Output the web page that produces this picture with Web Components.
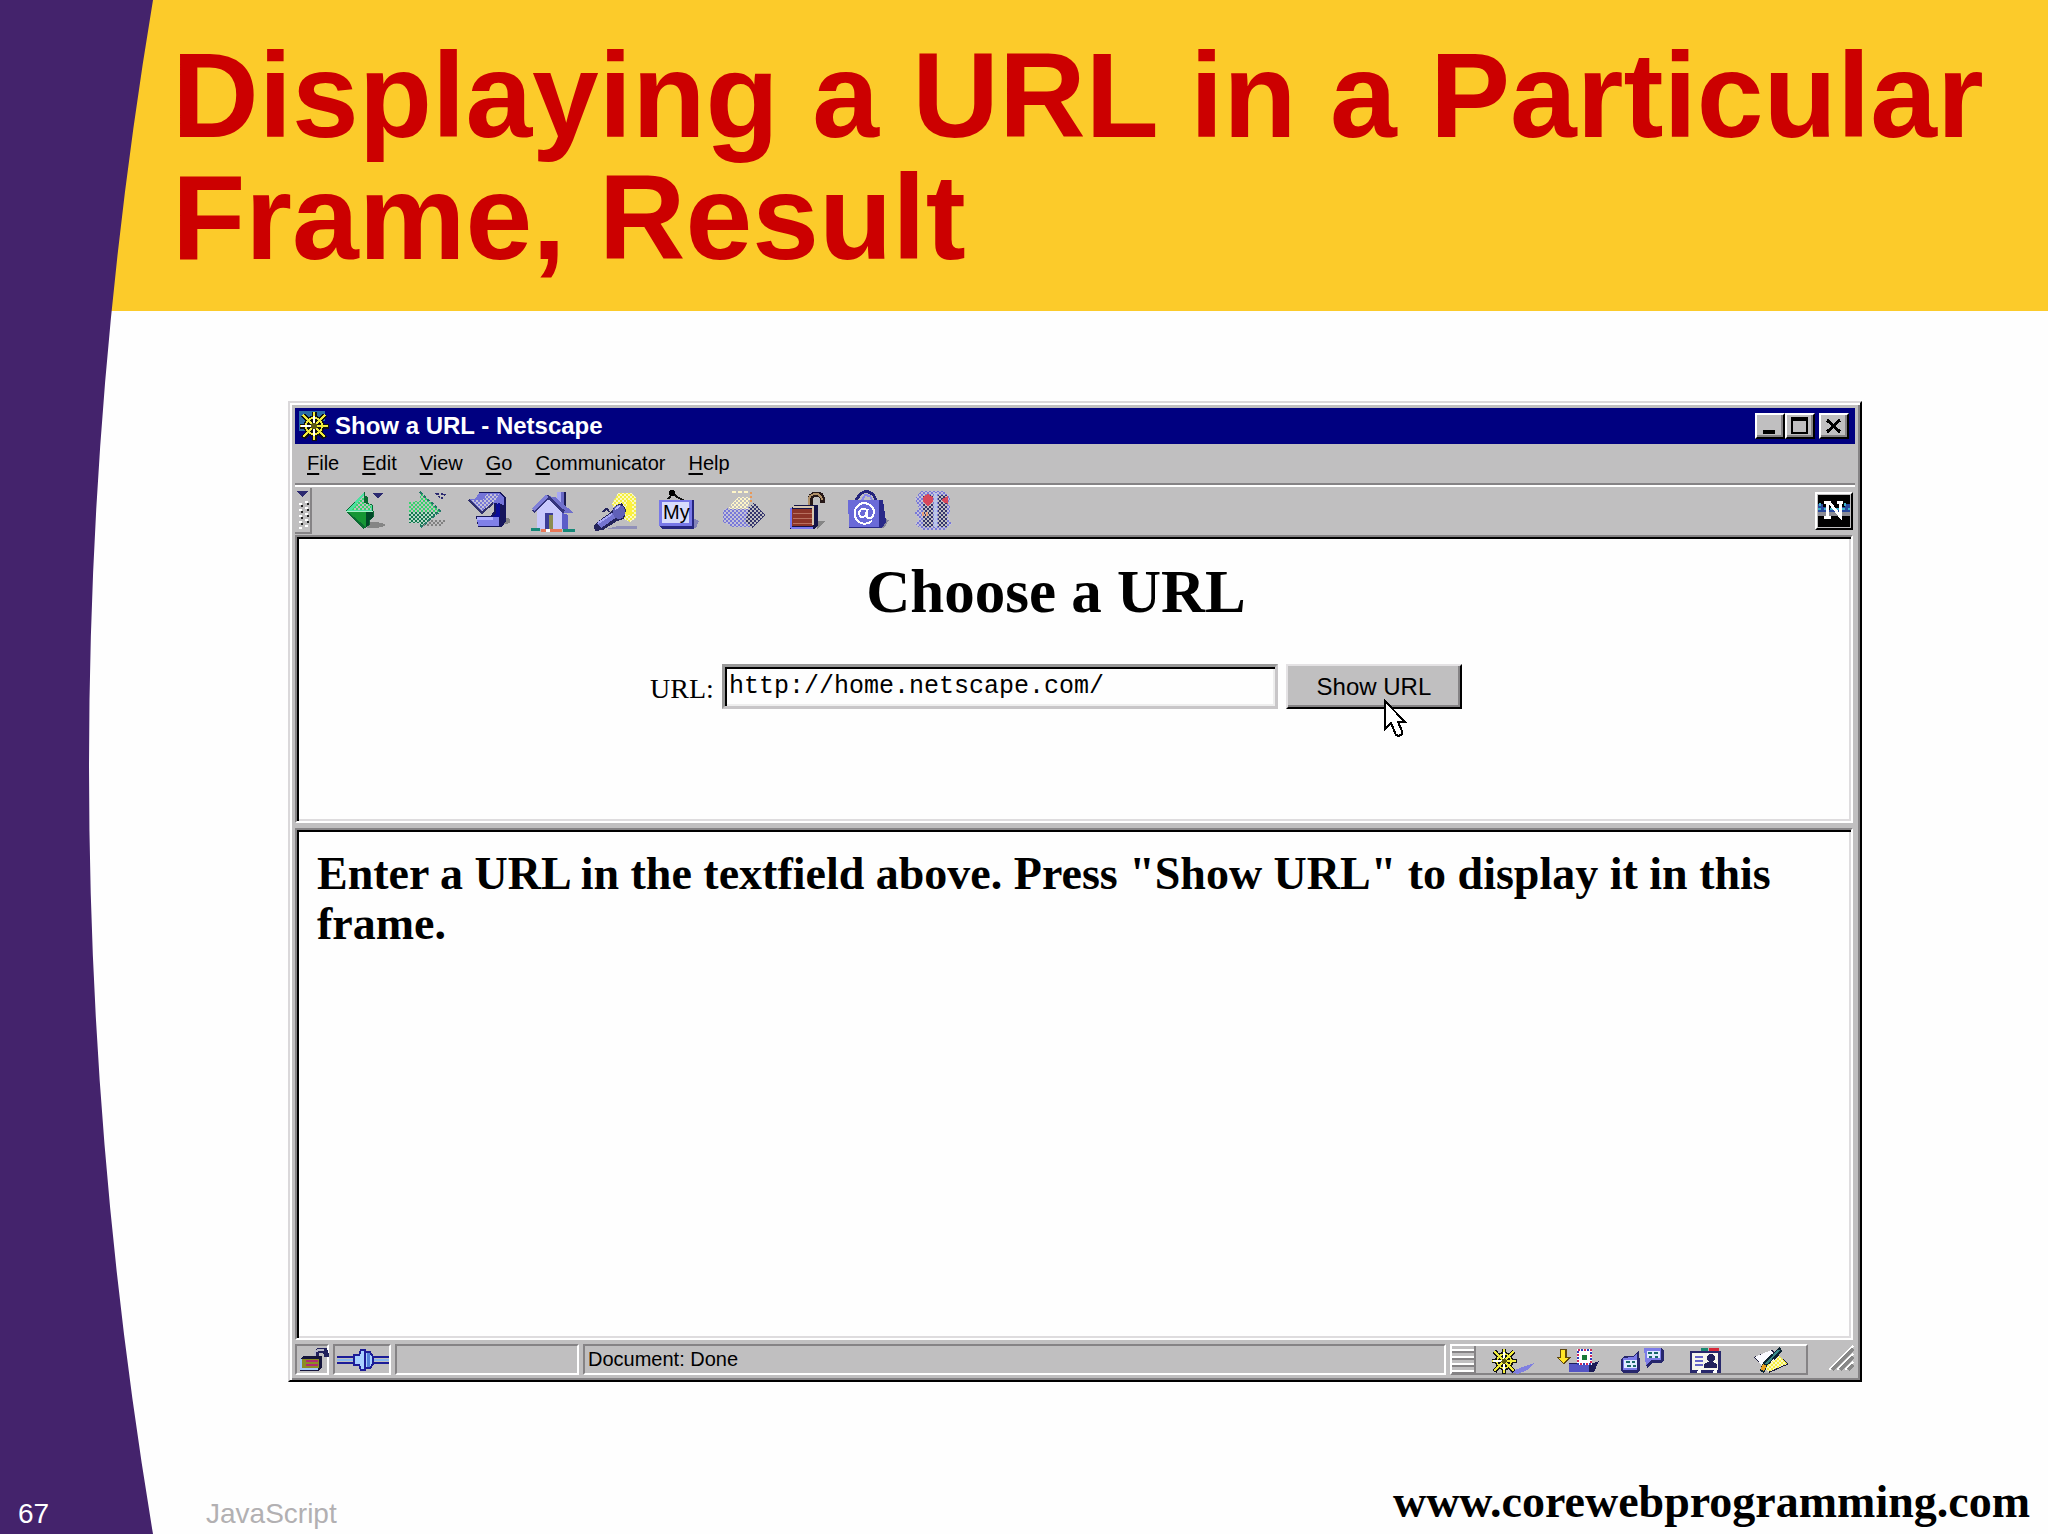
<!DOCTYPE html>
<html lang="en">
<head>
<meta charset="utf-8">
<title>Displaying a URL in a Particular Frame, Result</title>
<style>
  html, body { margin: 0; }
  body { background: #fefefe; font-family: "Liberation Sans", Arial, sans-serif; color: #000; }
</style>
</head>
<body>
<slide-page>
  <slide-title slot="title">Displaying a URL in a Particular Frame, Result</slide-title>
  <browser-window>
    <title-bar slot="chrome">Show a URL - Netscape</title-bar>
    <menu-bar slot="chrome" items="File,Edit,View,Go,Communicator,Help"></menu-bar>
    <tool-bar slot="chrome"></tool-bar>
    <url-frame slot="top" value="http://home.netscape.com/">Choose a URL</url-frame>
    <message-frame slot="bottom">Enter a URL in the textfield above. Press "Show URL" to display it in this frame.</message-frame>
    <status-bar slot="status">Document: Done</status-bar>
  </browser-window>
  <slide-footer slot="footer" number="67" site="www.corewebprogramming.com">JavaScript</slide-footer>
</slide-page>

<script>
// dithered fills shared by the small icons
const dither = `<defs>
  <pattern id="green" width="4" height="4" patternUnits="userSpaceOnUse"><path fill="#c0bfc0" d="M0 0h4v4H0z"/><path fill="#35d46c" d="M0 0h2v2H0zM2 2h2v2H2z"/></pattern>
  <pattern id="teal" width="4" height="4" patternUnits="userSpaceOnUse"><path fill="#b8d8c8" d="M0 0h4v4H0z"/><path fill="#147850" d="M0 0h2v2H0zM2 2h2v2H2z"/></pattern>
  <pattern id="blue" width="4" height="4" patternUnits="userSpaceOnUse"><path fill="#c4c2d8" d="M0 0h4v4H0z"/><path fill="#7878d8" d="M0 0h2v2H0zM2 2h2v2H2z"/></pattern>
  <pattern id="dark" width="4" height="4" patternUnits="userSpaceOnUse"><path fill="#c0bfc0" d="M0 0h4v4H0z"/><path fill="#34346c" d="M0 0h2v2H0zM2 2h2v2H2z"/></pattern>
  <pattern id="yellow" width="4" height="4" patternUnits="userSpaceOnUse"><path fill="#fbf9c0" d="M0 0h4v4H0z"/><path fill="#f4ee40" d="M0 0h2v2H0zM2 2h2v2H2z"/></pattern>
  <pattern id="cream" width="4" height="4" patternUnits="userSpaceOnUse"><path fill="#c0bfc0" d="M0 0h4v4H0z"/><path fill="#fff6c8" d="M0 0h2v2H0zM2 2h2v2H2z"/></pattern>
  <pattern id="grey" width="4" height="4" patternUnits="userSpaceOnUse"><path fill="#c0bfc0" d="M0 0h4v4H0z"/><path fill="#808080" d="M0 0h2v2H0zM2 2h2v2H2z"/></pattern>
</defs>`;

const wheel = `<g fill="none" stroke="#111" stroke-width="5"><path d="M15 1v29M1 15h29M4 4l22 23M26 4L4 27"/><circle cx="15" cy="15" r="8"/></g>
  <g fill="none" stroke="#f2ec3c" stroke-width="2"><path d="M15 1v28M1 15h28M4 4l22 22M26 4L4 26"/><circle cx="15" cy="15" r="8"/></g>
  <path d="M15 5v20M2 15h12" stroke="#fff" stroke-width="2"/><circle cx="15" cy="15" r="3" fill="#5c5810"/>`;

const icons = {
  wheel: [30, 30, `<path d="M0 0h30v30H0z" fill="#000080"/><path d="M0 0h26v10H10v10H0z" fill="#2a6ca8"/>` + wheel],
  back: [48, 42, `<ellipse cx="31" cy="35" rx="12" ry="3" fill="#858585"/>
    <path d="M23 1v5l3 1v6l5 2 1 12-4 3v5l-7 4L4 21z" fill="#0a6a32"/><path d="M22 2v11l8 2v6H5z" fill="#4ce0a0"/>
    <path d="M22 5v8l7 2v5H10z" fill="url(#green)"/><path d="M6 22h18v15z" fill="#159634"/><path d="M24 22h7v6l-4 2v5l-3 2z" fill="#004828"/><path d="M4 21h27" stroke="#a8f0c8" stroke-width="1"/>
    <path d="M31 3h10l-5 6z" fill="#2c2a70"/>`],
  forward: [48, 42, `<path d="M17 30h24l-6 6H16z" fill="url(#grey)"/>
    <path d="M15 2l20 19-20 17v-5H4V12l11-1z" fill="url(#green)"/><path d="M4 22h31L15 38v-5H4z" fill="url(#teal)"/>
    <path d="M15 2l20 19-20 17" fill="none" stroke="#247868" stroke-width="2" stroke-dasharray="3 2"/>
    <path d="M32 4h8l-4 5z" fill="none" stroke="#2c2a70" stroke-width="2" stroke-dasharray="2 2"/>`],
  reload: [48, 42, `<path d="M35 26l7 3v4l-8 2z" fill="#858585"/>
    <path d="M11 2h22l5 6v23l-4 6H10L8 26h15l3-5V10H10z" fill="#16165c"/>
    <path d="M11 3h20l5 5v7l-9-2-12 10L1 9h6z" fill="#7474d8"/><path d="M3 10h12l4-6h12l-4 8-12 10z" fill="url(#blue)"/>
    <path d="M9 27h22v9H10z" fill="#8080e8"/><path d="M9 27h16v3H9z" fill="#b0b0ff"/><path d="M28 14l4-1v14h-7l3-4z" fill="#0a0a98"/>
    <path d="M1 10l13 13 11-10" fill="none" stroke="#30306c" stroke-width="2"/>`],
  home: [48, 42, `<path d="M31 23l6 2v14h-6z" fill="#5c5cc8"/><path d="M26 2h8v17h-8z" fill="#6868c4"/><path d="M26 2h4v15h-4z" fill="#a8a8f4"/><path d="M34 2v16" stroke="#1c1c54" stroke-width="2"/>
    <path d="M16 8l15 15v16H6V20z" fill="#c8c8fc"/><path d="M16 6l8 1 19 16h-9z" fill="#7070cc"/>
    <path d="M2 22L17 7l16 15" fill="none" stroke="#34347c" stroke-width="3"/><path d="M2 20L16 6" stroke="#8080d8" stroke-width="3"/>
    <path d="M14 23h8v16h-8z" fill="#3c3c98"/><path d="M18 25h4v14h-4z" fill="#8c8c50"/>
    <path d="M0 39h9M32 40h12" stroke="#168878" stroke-width="3"/><path d="M10 40h21" stroke="#e87858" stroke-width="3"/><path d="M15 40h4" stroke="#fff" stroke-width="3"/>`],
  search: [48, 42, `<path d="M24 36h19v3H12z" fill="#9090b8"/><path d="M24 3h14l4 5v20l-6 4-12-6-6-12z" fill="url(#yellow)"/><path d="M33 10l5 2v12l-6 2z" fill="#fff23c"/>
    <path d="M22 15l6-2 4 7-2 9-7 2-14 9-8 1-1-5 3-4 13-9z" fill="#24245c"/>
    <path d="M3 33l16-10 4 4L7 38z" fill="#7474d0"/><path d="M4 33l14-9" stroke="#a8a8f8" stroke-width="2"/><ellipse cx="25" cy="22" rx="6" ry="7" fill="#6060b8"/><path d="M21 19l5-3" stroke="#b8b8ff" stroke-width="2"/><path d="M9 22q4-6 6 0" fill="none" stroke="#24245c" stroke-width="2"/>`],
  my: [48, 42, `<path d="M36 28l6 3-3 7h-8z" fill="#8484b8"/><path d="M11 9l5-6 4 4 8 4" fill="none" stroke="#111" stroke-width="2"/><circle cx="15" cy="3" r="3"/>
    <path d="M2 10h35v29H5l-3-3z" fill="#262680"/><path d="M2 10h33v26H2z" fill="#7878e8"/><path d="M5 12h27v21H5z" fill="#d8dcfc"/>
    <text x="6" y="29" font-size="20" font-family="Liberation Sans, Arial, sans-serif">My</text>`],
  print: [48, 42, `<path d="M3 20l8-3h20l12 7-9 13H13L3 32z" fill="url(#blue)"/><path d="M29 18l5-6 11 13-13 14-7-7z" fill="url(#dark)"/>
    <path d="M18 7h12l-2 12H8l6-8z" fill="url(#cream)"/><path d="M12 2h18" stroke="#fff6c8" stroke-width="2" stroke-dasharray="4 2"/><path d="M31 2v12" stroke="#e89858" stroke-width="2" stroke-dasharray="2 2"/>`],
  lock: [48, 42, `<path d="M34 31h8l-8 8z" fill="#858585"/><path d="M27 17V8q2-4 7-4 6 0 6 9" fill="none" stroke="#261818" stroke-width="5"/><path d="M26 17V8q2-4 7-4 5 0 6 6" fill="none" stroke="#b09068" stroke-width="2"/>
    <path d="M7 19l4-4h24v20l-4 4H7z" fill="#141448"/><path d="M9 19h21v17H9z" fill="#8c3428"/><path d="M10 23h20M10 28h20M10 33h20" stroke="#b87060" stroke-width="1"/>
    <path d="M8 18v20M8 38h22" stroke="#7878f0" stroke-width="2"/><path d="M10 17h20v18" fill="none" stroke="#d8c8b0" stroke-width="2"/>`],
  shop: [48, 42, `<path d="M36 28l7 2-5 8h-7z" fill="#858598"/><path d="M9 12l5-8 6-3 7 3 4 8" fill="none" stroke="#24247c" stroke-width="3"/><path d="M15 12l4-7 5 1 3 6" fill="none" stroke="#8888ec" stroke-width="2"/>
    <path d="M2 10h35l3 22-4 6H3z" fill="#282888"/><path d="M2 10h31v27H3z" fill="#6a6ad8"/>
    <path d="M26 31q-6 5-13 1-7-6-3-14 5-7 12-4 8 3 5 12-3 4-6 1v-8M20 19q-7-1-7 5 1 5 6 2l3-7" fill="none" stroke="#fff" stroke-width="2"/>`],
  stop: [48, 42, `<path d="M12 1h22l7 5v5l-3 2 3 4v6l-3 3 5 8-8 6H14l-8-6 4-5-4-6 4-5-4-9z" fill="url(#blue)"/><path d="M14 5h10v32H14zM29 5h9v32h-9z" fill="url(#dark)"/>
    <path d="M14 7l5-3 5 3v5l-5 4-5-4zM33 9l6-3v8l-5-2z" fill="#d8485c"/><path d="M13 24h6" stroke="#e8a078" stroke-width="4" stroke-dasharray="2 2"/><path d="M26 3v34" stroke="#b8c4e8" stroke-width="3"/>`],
  netscape: [32, 32, `<path d="M0 0h32v32H0z" fill="#000"/><path d="M0 9h5v3h5v3h13v-3h4V9h5v11H0z" fill="#28489c"/><path d="M0 14h32M2 8v4M27 8v4" stroke="#3cb0c8" stroke-width="2" stroke-dasharray="3 3"/><path d="M0 17h32v4H0z" fill="#8c8c94"/>
    <path d="M9 7v14M6 7h5l11 14V7M19 7h6M6 22h7" fill="none" stroke="#fff" stroke-width="3"/>`],
  smallock: [32, 26, `<path d="M17 9V6l3-3h6l2 7" fill="none" stroke="#20205c" stroke-width="5"/><path d="M16 9V5l3-2h6" fill="none" stroke="#b8b8c8" stroke-width="2"/>
    <path d="M1 12l3-3h19v11l-3 4H1z" fill="#15153c"/><path d="M3 12h17v9H3z" fill="#8c8c24"/><path d="M7 14h12M7 18h12" stroke="#b02c70" stroke-width="2"/><path d="M2 12v10h17" fill="none" stroke="#a0c8f8" stroke-width="2"/>`],
  plug: [52, 26, `<path d="M0 10h17M0 16h17M36 10h16M36 16h16" stroke="#1c1c98" stroke-width="2"/><path d="M0 13h17M36 13h16" stroke="#88b8f0" stroke-width="2"/>
    <path d="M17 8h5l2-5h4v20h-4l-2-5h-5zM28 5h5l3 5v7l-3 4h-5z" fill="#a8d0ff" stroke="#1c1c98" stroke-width="2"/><path d="M31 6v14" stroke="#5080d8" stroke-width="3"/>`],
  navigator: [44, 26, `<path d="M18 24l25-9-7 7-9 4z" fill="#8080e0"/><g transform="scale(.87)">` + wheel + `</g>`],
  mail: [44, 26, `<path d="M4 1h7v8h4L8 17 0 9h4z" fill="#60480c"/><path d="M5 2h4v8h3l-5 5-5-5h3z" fill="#ffe428"/>
    <path d="M13 15h24l6-2-5 11H13z" fill="#1c1c58"/><path d="M13 16h20v8H13z" fill="#5454c4"/><path d="M21 1h15v16H21z" fill="#fff"/>
    <path d="M22 2h13v14H22z" fill="none" stroke="#d42858" stroke-width="2" stroke-dasharray="2 4"/><path d="M22 2h13v14H22z" fill="none" stroke="#2c3cc0" stroke-width="2" stroke-dasharray="2 4" stroke-dashoffset="3"/><path d="M26 7h5v5h-5z" fill="#187838"/>`],
  discuss: [44, 26, `<path d="M13 8l5-6v7l1 2v12l-3 2H2l-2-3V11l3-3z" fill="#26266c"/><path d="M12 9l4-4v17H2V10z" fill="#7c7ce8"/><path d="M3 12h13v8H3z" fill="#e0ecff"/><path d="M5 14h4M11 14h3M6 18h4M12 18h3" stroke="#186868" stroke-width="2"/>
    <path d="M23 0h18l2 3v9l-3 3h-9l-5 6z" fill="#26266c"/><path d="M23 0h17v12H30l-5 6z" fill="#7c7ce8"/><path d="M26 3h13v7H26z" fill="#e0ecff"/><path d="M27 5h4M33 5h4M28 9h3M34 9h3" stroke="#186868" stroke-width="2"/>`],
  book: [44, 26, `<path d="M15 0h7v3h-7z" fill="#188870"/><path d="M23 0h10v4H23z" fill="#d82838"/><path d="M4 3h31v22H4z" fill="#28286c"/><path d="M6 5h26v17H6z" fill="#f6f6ec"/>
    <path d="M9 9h8M9 13h8M9 17h8" stroke="#6464c8" stroke-width="2"/><path d="M18 20v-4l4-2h5l4 2v4z" fill="#20205c"/><circle cx="25" cy="10" r="4" fill="#20205c"/><path d="M11 23l2-2 2 2v2h-4zM27 23l2-2 2 2v2h-4z" fill="#fff"/>`],
  composer: [44, 26, `<path d="M3 9L21 2l17 14-20 9z" fill="#1c1c3c"/><path d="M4 9l16-7 6 7-13 11z" fill="#fafaff"/><path d="M13 20l15-12 8 8-19 8z" fill="url(#yellow)"/>
    <path d="M30 1L14 16l-3 8" fill="none" stroke="#0c2430" stroke-width="5"/><path d="M28 2L15 16" stroke="#388888" stroke-width="2"/><path d="M14 17l-3 5" stroke="#e8a020" stroke-width="4"/>`],
  cursor: [24, 40, `<path d="M1 1v28l6-6 5 12 3 1 3-2v-3l-4-9h7z" fill="#fff" stroke="#000" stroke-width="2"/>`],
  grip: [28, 28, `<path d="M2 26L26 2M10 26L26 10M18 26l8-8" stroke="#fff" stroke-width="2"/><path d="M5 26L26 5M13 26l13-13M21 26l5-5" stroke="#888" stroke-width="3"/>`]
};

function define(name, getHTML) {
  customElements.define(name, class extends HTMLElement {
    constructor() {
      super();
      this.attachShadow({mode: 'open'}).innerHTML = getHTML(this);
    }
  });
}

define('px-icon', el => {
  const [w, h, body] = icons[el.getAttribute('name')];
  return `<style>:host { display: block; flex: none; } svg { display: block; overflow: visible; }</style>
    <svg width="${w}" height="${h}" viewBox="0 0 ${w} ${h}" shape-rendering="crispEdges" aria-hidden="true">${dither}${body}</svg>`;
});

define('slide-page', () => `<style>
    :host { display: flex; flex-direction: column; position: relative; min-height: 100vh; }
    .band { position: absolute; left: 0; top: 0; width: 153px; height: 100%; }
    main { flex: 1; display: flex; padding: 90px 186px 0 288px; }
    ::slotted(browser-window) { flex: 1; min-width: 0; }
  </style>
  <slot name="title"></slot>
  <svg class="band" viewBox="0 0 153 1534" preserveAspectRatio="none" aria-hidden="true"><path d="M0 0h153Q25 767 153 1534H0z" fill="#44236c"/></svg>
  <main><slot></slot></main>
  <slot name="footer"></slot>`);

define('slide-title', () => `<style>
    :host { display: block; background: #fccb2a; padding: 34px 40px 33px 172px; }
    h1 { margin: 0; font-size: 120px; line-height: 122px; color: #cc0000; }
  </style>
  <h1><slot></slot></h1>`);

define('slide-footer', el => `<style>
    :host { display: flex; align-items: flex-end; position: relative; height: 146px; padding: 0 18px 6px; font-size: 28px; line-height: 28px; }
    .number { width: 188px; color: #fff; }
    .topic { flex: 1; color: #b2b0b2; }
    a { font: bold 46px/46px "Liberation Serif", "Times New Roman", serif; color: #000; text-decoration: none; padding-bottom: 3px; }
  </style>
  <span class="number">${el.getAttribute('number')}</span>
  <span class="topic"><slot></slot></span>
  <a href="#">${el.getAttribute('site')}</a>`);

define('browser-window', () => `<style>
    :host { display: flex; flex-direction: column; box-sizing: border-box; padding: 5px; background: #c0bfc0;
      border: 2px solid; border-color: #dad8da #000 #000 #dad8da;
      box-shadow: inset 2px 2px #fff, inset -2px -2px #858385; }
    .frames { flex: 1; display: flex; flex-direction: column; gap: 5px; margin-bottom: 4px; }
    ::slotted(message-frame) { flex: 1; }
  </style>
  <slot name="chrome"></slot>
  <div class="frames"><slot name="top"></slot><slot name="bottom"></slot></div>
  <slot name="status"></slot>`);

define('title-bar', () => `<style>
    :host { display: flex; align-items: center; height: 36px; padding: 0 6px 0 4px; background: #000080; color: #fff; font-size: 24px; font-weight: bold; }
    .caption { flex: 1; margin-left: 6px; line-height: 28px; }
    button { width: 30px; height: 26px; padding: 0; display: grid; place-items: center; background: #c0bfc0;
      border: 2px solid; border-color: #fff #000 #000 #fff; box-shadow: inset -2px -2px #858385; }
    button:last-child { margin-left: 4px; }
    svg { display: block; }
  </style>
  <px-icon name="wheel"></px-icon>
  <span class="caption"><slot></slot></span>
  <button aria-label="Minimize"><svg width="20" height="18"><path d="M3 13h12v4H3z"/></svg></button>
  <button aria-label="Maximize"><svg width="20" height="18"><path d="M1 0h17v17H1zM3 4v11h13V4z" fill-rule="evenodd"/></svg></button>
  <button aria-label="Close"><svg width="20" height="18" shape-rendering="crispEdges"><path d="M3 3l13 12M16 3L3 15" stroke="#000" stroke-width="3"/></svg></button>`);

define('menu-bar', el => `<style>
    :host { display: flex; align-items: center; gap: 23px; height: 39px; padding: 0 12px; border-bottom: 2px solid #858385; box-shadow: 0 2px #fff; margin-bottom: 2px; }
    button { border: 0; padding: 0 0 2px; background: none; font: 20px/24px "Liberation Sans", Arial, sans-serif; color: #000; }
    u { text-decoration-thickness: 2px; text-underline-offset: 3px; }
  </style>` + el.getAttribute('items').split(',').map(x => `<button><u>${x[0]}</u>${x.slice(1)}</button>`).join(''));

define('tool-bar', () => `<style>
    :host { display: flex; align-items: center; height: 48px; padding-right: 2px; }
    .grip { box-sizing: border-box; width: 17px; height: 46px; padding: 3px 2px; border-right: 2px solid #858385; border-bottom: 2px solid #858385; }
    .grip svg { display: block; }
    .tools { flex: 1; display: flex; gap: 15px; margin-left: 30px; }
    button { border: 0; padding: 0; background: none; }
    .logo { padding: 1px; border: 2px solid; border-color: #fff #000 #000 #fff; }
  </style>
  <div class="grip"><svg width="12" height="40" shape-rendering="crispEdges"><path d="M0 0h11L5 6z" fill="#2c2a70"/>
    <path d="M3 12v26M9 10v26" stroke="#fff" stroke-width="3" stroke-dasharray="2 4"/><path d="M5 14v24M11 12v24" stroke="#222" stroke-width="2" stroke-dasharray="2 4"/></svg></div>
  <div class="tools">${['back', 'forward', 'reload', 'home', 'search', 'my', 'print', 'lock', 'shop', 'stop']
    .map(x => `<button aria-label="${x}"><px-icon name="${x}"></px-icon></button>`).join('')}</div>
  <button class="logo" aria-label="Netscape"><px-icon name="netscape"></px-icon></button>`);

const frameStyle = `
    :host { display: block; box-sizing: border-box; margin-right: 2px; background: #fefefe;
      border: 2px solid; border-color: #858385 #fff #fff #858385;
      box-shadow: inset 2px 2px #000, inset -2px -2px #dedcde; }`;

define('url-frame', el => `<style>${frameStyle}
    :host { height: 288px; padding: 23px 50px 0 14px; font-family: "Liberation Serif", "Times New Roman", serif; text-align: center; }
    h1 { margin: 0; font-size: 61px; line-height: 64px; }
    form { display: flex; justify-content: center; align-items: center; gap: 8px; margin-top: 40px; }
    label { font-size: 28px; line-height: 32px; padding-top: 5px; }
    input { box-sizing: border-box; width: 556px; height: 45px; padding: 0 4px; background: #fefefe; color: #000;
      font: 25px "Liberation Mono", "Courier New", monospace;
      border: 3px solid; border-color: #999 #c8c6c8 #c8c6c8 #999; box-shadow: inset 2px 2px #000, inset -2px -2px #eee; }
    .press { position: relative; }
    button { display: block; width: 176px; height: 45px; padding: 0; background: #c0bfc0; color: #000;
      font: 24px "Liberation Sans", Arial, sans-serif;
      border: 2px solid; border-color: #e4e2e4 #000 #000 #e4e2e4; box-shadow: inset -2px -2px #858385; }
    px-icon { position: absolute; left: 98px; top: 36px; }
  </style>
  <h1><slot></slot></h1>
  <form>
    <label for="url">URL:</label>
    <input id="url" type="text" value="${el.getAttribute('value')}">
    <span class="press"><button type="button">Show URL</button><px-icon name="cursor"></px-icon></span>
  </form>`);

define('message-frame', () => `<style>${frameStyle}
    :host { padding: 19px 60px 19px 20px; }
    h2 { margin: 0; font: bold 46px/50px "Liberation Serif", "Times New Roman", serif; }
  </style>
  <h2><slot></slot></h2>`);

define('status-bar', () => `<style>
    :host { display: flex; gap: 4px; height: 31px; font-size: 20px; }
    .cell { box-sizing: border-box; display: flex; align-items: center; border: 2px solid; border-color: #858385 #fff #fff #858385; padding-left: 2px; }
    .lock { width: 34px; }
    .plug { width: 58px; }
    .progress { width: 184px; }
    .text { flex: 1; padding-left: 3px; }
    .parts { box-sizing: border-box; width: 358px; display: flex; align-items: center; gap: 21px; border: 2px solid; border-color: #fff #858385 #858385 #fff; }
    .lines { width: 22px; height: 27px; margin-right: -6px; border-right: 2px solid #858385;
      background: repeating-linear-gradient(#c0bfc0 0 3px, #fff 3px 5px, #858385 5px 7px); }
    button { border: 0; padding: 2px 0 0; background: none; }
    .size { margin-left: 15px; }
  </style>
  <div class="cell lock"><px-icon name="smallock"></px-icon></div>
  <div class="cell plug"><px-icon name="plug"></px-icon></div>
  <div class="cell progress"></div>
  <div class="cell text"><slot></slot></div>
  <div class="parts"><div class="lines"></div>${['navigator', 'mail', 'discuss', 'book', 'composer']
    .map(x => `<button aria-label="${x}"><px-icon name="${x}"></px-icon></button>`).join('')}</div>
  <px-icon class="size" name="grip"></px-icon>`);
</script>
</body>
</html>
